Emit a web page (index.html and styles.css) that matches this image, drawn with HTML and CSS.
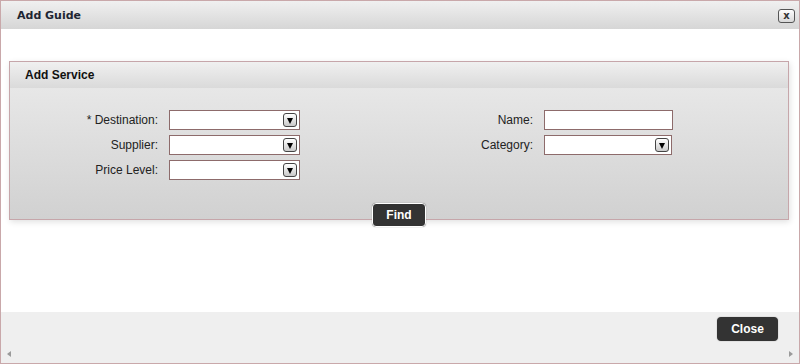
FILE: index.html
```html
<!DOCTYPE html>
<html lang="en">
<head>
  <meta charset="UTF-8" />
  <title>Add Guide</title>
  <link rel="stylesheet" href="styles.css">
</head>
<body>
  <div class="dialog">
    <div class="titlebar">
      <span class="title">Add Guide</span>
      <button class="x-btn">x</button>
    </div>

    <div class="content">
      <div class="panel">
        <div class="panel-head">Add Service</div>
        <div class="panel-body">
          <div class="form-cols">
            <div class="group group-left">
              <label>* Destination:</label>
              <div class="select"><span class="arrow"></span></div>
              <label>Supplier:</label>
              <div class="select"><span class="arrow"></span></div>
              <label>Price Level:</label>
              <div class="select"><span class="arrow"></span></div>
            </div>
            <div class="group group-right">
              <label>Name:</label>
              <input type="text" class="text-input">
              <label>Category:</label>
              <div class="select narrow"><span class="arrow"></span></div>
            </div>
          </div>
          <div class="find-row">
            <button class="btn find-btn">Find</button>
          </div>
        </div>
      </div>
    </div>

    <div class="footer">
      <div class="footer-actions">
        <button class="btn close-btn">Close</button>
      </div>
      <div class="scroll-arrows">
        <span class="arr arr-left"></span>
        <span class="arr arr-right"></span>
      </div>
    </div>
  </div>
</body>
</html>
```

FILE: styles.css
```css
* {
  box-sizing: border-box;
}
html, body {
  margin: 0;
  padding: 0;
  width: 100%;
  height: 100%;
  background: #fff;
  font-family: "Liberation Sans", Arial, sans-serif;
  font-size: 12px;
  color: #222;
  overflow: hidden;
}
.dialog {
  width: 800px;
  height: 364px;
  border: 1px solid #c9a8aa;
  display: flex;
  flex-direction: column;
}
.titlebar {
  height: 28px;
  flex: none;
  display: flex;
  align-items: center;
  justify-content: space-between;
  padding: 0 4px 0 16px;
  background: linear-gradient(#f0f0f0, #d6d6d6);
}
.title {
  font-family: "DejaVu Sans", Verdana, sans-serif;
  font-weight: bold;
  font-size: 11px;
  color: #1e2633;
  margin-top: 1px;
}
.x-btn {
  width: 17px;
  height: 14px;
  padding: 0;
  margin-top: 2px;
  border: 1px solid #555;
  border-radius: 3px;
  background: linear-gradient(#fdfdfd, #d8d8d8);
  font-family: "DejaVu Sans", sans-serif;
  font-size: 10px;
  font-weight: bold;
  line-height: 10px;
  color: #333;
}
.content {
  flex: 1;
  background: #fff;
  padding: 32px 0 0 8px;
}
.panel {
  width: 780px;
  border: 1px solid #c6a6aa;
  box-shadow: 1px 2px 6px rgba(0, 0, 0, 0.12);
}
.panel-head {
  height: 26px;
  display: flex;
  align-items: center;
  padding-left: 15px;
  font-weight: bold;
  color: #111;
  background: linear-gradient(#f0f0f0, #dadada);
}
.panel-body {
  display: flex;
  flex-direction: column;
  padding-top: 22px;
  background: linear-gradient(#e7e7e7, #d1d1d1);
}
.form-cols {
  display: flex;
}
.group {
  display: grid;
  column-gap: 11px;
  row-gap: 5px;
  grid-auto-rows: 20px;
  align-items: center;
}
.group-left {
  grid-template-columns: 148px 131px;
}
.group-right {
  grid-template-columns: 233px 129px;
}
label {
  text-align: right;
  color: #222;
}
.select, .text-input {
  height: 20px;
  border: 1px solid #8d6b6b;
  background: #fff;
}
.text-input {
  width: 129px;
  margin: 0;
  padding: 0;
}
.select {
  display: flex;
  align-items: center;
  justify-content: flex-end;
  padding-right: 2px;
}
.select.narrow {
  width: 128px;
}
.arrow {
  width: 14px;
  height: 14px;
  border: 1px solid #444;
  border-radius: 3px;
  background: linear-gradient(#ffffff, #c9c9c9);
  display: flex;
  align-items: center;
  justify-content: center;
}
.arrow::after {
  content: "";
  border-left: 3px solid transparent;
  border-right: 3px solid transparent;
  border-top: 6px solid #000;
  margin-top: 1px;
}
.find-row {
  display: flex;
  justify-content: center;
  margin-top: 23px;
  margin-bottom: -8px;
}
.btn {
  height: 24px;
  padding: 0;
  border: 1px solid #fff;
  border-radius: 4px;
  background: #333;
  color: #fff;
  font-family: "Liberation Sans", Arial, sans-serif;
  font-size: 12px;
  font-weight: bold;
  box-shadow: 0 0 1px rgba(0, 0, 0, 0.5);
}
.find-btn {
  width: 54px;
}
.close-btn {
  width: 61px;
  border-color: #333;
}
.footer {
  height: 51px;
  flex: none;
  background: #efefef;
  padding-top: 5px;
}
.footer-actions {
  display: flex;
  justify-content: flex-end;
  padding-right: 21px;
}
.scroll-arrows {
  display: flex;
  justify-content: space-between;
  padding: 0 6px;
  margin-top: 10px;
}
.arr {
  width: 0;
  height: 0;
  border-top: 3px solid transparent;
  border-bottom: 3px solid transparent;
}
.arr-left {
  border-right: 4px solid #9a9a9a;
}
.arr-right {
  border-left: 4px solid #9a9a9a;
}
```
